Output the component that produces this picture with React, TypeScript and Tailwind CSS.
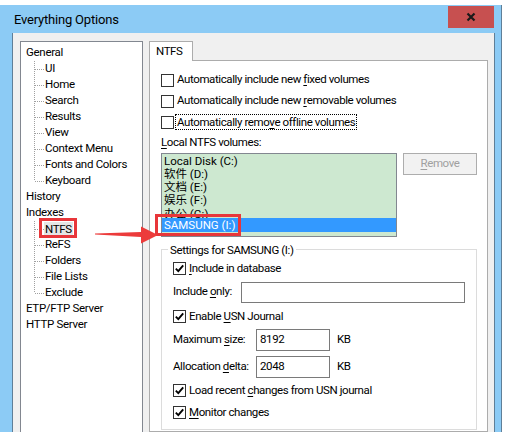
import type { ReactNode } from "react";

const font = "font-['Roboto','Noto_Sans_CJK_SC',sans-serif]";

// dotted tree connector drawn for each child row
const Connector = ({ last }: { last?: boolean }) => (
  <svg width="11" height="16" className="shrink-0">
    <line x1="0.5" y1="0" x2="0.5" y2={last ? 8 : 16} stroke="#a0a0a0" strokeDasharray="1 1" />
    <line x1="1" y1="8.5" x2="10" y2="8.5" stroke="#a0a0a0" strokeDasharray="1 1" />
  </svg>
);

const Root = ({ label }: { label: string }) => (
  <div className="h-[16px] flex items-center">{label}</div>
);

const Child = ({ label, last, selected }: { label: string; last?: boolean; selected?: boolean }) => (
  <div className="h-[16px] flex items-center pl-[8px]">
    <Connector last={last} />
    <span className={selected ? "bg-[#e5e5e5] px-[1px] -ml-[1px] leading-[15px]" : ""}>{label}</span>
  </div>
);

const Checkbox = ({ checked }: { checked?: boolean }) => (
  <span className="w-[13px] h-[13px] border border-[#333333] bg-white flex items-center justify-center shrink-0">
    {checked && (
      <svg width="11" height="11" viewBox="0 0 11 11">
        <path d="M1.8 5.6 L4.3 8.1 L9.2 2.4" fill="none" stroke="#000" strokeWidth="1.9" />
      </svg>
    )}
  </span>
);

const CheckRow = ({ checked, children, className = "" }: { checked?: boolean; children: ReactNode; className?: string }) => (
  <div className={`h-[20px] flex items-center gap-[3px] ${className}`}>
    <Checkbox checked={checked} />
    <span>{children}</span>
  </div>
);

const volumes = ["Local Disk (C:)", "软件 (D:)", "文档 (E:)", "娱乐 (F:)"];

export default function App() {
  return (
    <div className={`relative w-[506px] h-[432px] overflow-hidden bg-white text-[11.5px] tracking-[-0.4px] text-black whitespace-nowrap ${font}`}>
      <div className="mt-[5px] w-[502px] h-[427px] bg-[#8ccbf5] border-r border-[#5f7f98] flex flex-col">
        {/* title bar */}
        <div className="h-[28px] shrink-0 flex justify-between">
          <div className="pl-[14px] pt-[5px] text-[13px] tracking-[-0.2px] leading-[20px]">Everything Options</div>
          <div className="mt-[1px] mr-[7px] w-[46px] h-[22px] bg-[#c75050] flex items-center justify-center">
            <svg width="10" height="10" viewBox="0 0 10 10">
              <path d="M1.5 1.5 L8.5 8.5 M8.5 1.5 L1.5 8.5" stroke="#1a1a1a" strokeWidth="2.2" />
            </svg>
          </div>
        </div>

        {/* dialog body */}
        <div className="flex-1 ml-[12px] w-[483px] border-l border-r border-[#5f7f98] bg-[#f0f0f0] pl-[7px] pt-[8px] flex gap-[6px] overflow-hidden">
          {/* tree */}
          <div className="w-[123px] h-[400px] shrink-0 bg-white border border-[#828790] pl-[5px] pt-[3px] tracking-[-0.3px]">
            <Root label="General" />
            <Child label="UI" />
            <Child label="Home" />
            <Child label="Search" />
            <Child label="Results" />
            <Child label="View" />
            <Child label="Context Menu" />
            <Child label="Fonts and Colors" />
            <Child label="Keyboard" last />
            <Root label="History" />
            <Root label="Indexes" />
            <Child label="NTFS" selected />
            <Child label="ReFS" />
            <Child label="Folders" />
            <Child label="File Lists" />
            <Child label="Exclude" last />
            <Root label="ETP/FTP Server" />
            <Root label="HTTP Server" />
          </div>

          {/* tab control */}
          <div className="w-[339px] shrink-0 flex flex-col">
            <div className="relative z-10 -mb-px w-[44px] h-[21px] bg-white border border-b-0 border-[#acacac] pl-[6px] flex items-center">
              NTFS
            </div>
            <div className="h-[400px] bg-white border border-[#acacac] pl-[11px] pt-[9px]">
              <div className="h-[21px] flex items-center gap-[3px]">
                <Checkbox />
                <span>Automatically include new <u className="underline-offset-2">f</u>ixed volumes</span>
              </div>
              <div className="h-[21px] flex items-center gap-[3px]">
                <Checkbox />
                <span>Automatically include new <u className="underline-offset-2">r</u>emovable volumes</span>
              </div>
              <div className="h-[21px] flex items-center gap-[2px]">
                <Checkbox />
                <span className="outline outline-1 outline-dotted outline-black px-[1px] leading-[14px]">
                  Automatically remo<u className="underline-offset-2">v</u>e offline volumes
                </span>
              </div>
              <div className="h-[20px] flex items-center">
                <span><u className="underline-offset-2">L</u>ocal NTFS volumes:</span>
              </div>

              <div className="flex items-start gap-[6px]">
                <div className="w-[236px] h-[84px] border border-[#828790] bg-[#cde8d0] pt-[1px] flex flex-col overflow-hidden tracking-normal">
                  {volumes.map((v) => (
                    <div key={v} className="h-[13px] shrink-0 pl-[2px] flex items-center leading-[13px]">
                      {v}
                    </div>
                  ))}
                  <div className="h-[11px] shrink-0 pl-[2px] overflow-hidden leading-[13px] pt-[1px]">办公 (G:)</div>
                  <div className="h-[14px] shrink-0 bg-[#3399ff] text-white pl-[2px] flex items-center leading-[14px]">SAMSUNG (I:)</div>
                </div>
                <div className="w-[74px] h-[22px] border border-[#adadad] bg-[#f2f2f2] text-[#a0a0a0] flex items-center justify-center">
                  <span><u className="underline-offset-2">R</u>emove</span>
                </div>
              </div>

              <fieldset className="mt-[5px] w-[316px] border border-[#dcdcdc] px-0 pb-[6px]">
                <legend className="ml-[6px] px-[2px] leading-[16px]">Settings for SAMSUNG (I:)</legend>
                <div className="px-[11px]">
                  <CheckRow checked className="mt-[1px]">
                    <u className="underline-offset-2">I</u>nclude in database
                  </CheckRow>
                  <div className="mt-[3px] h-[21px] flex items-center">
                    <span className="w-[68px] shrink-0">Include <u className="underline-offset-2">o</u>nly:</span>
                    <div className="w-[224px] h-[21px] border border-[#7a7a7a] bg-white" />
                  </div>
                  <CheckRow checked className="mt-[4px]">
                    Enable <u className="underline-offset-2">U</u>SN Journal
                  </CheckRow>
                  <div className="mt-[2px] h-[22px] flex items-center">
                    <span className="w-[83px] shrink-0">Maximum <u className="underline-offset-2">s</u>ize:</span>
                    <div className="w-[74px] h-[22px] border border-[#7a7a7a] bg-white pl-[3px] flex items-center">8192</div>
                    <span className="ml-[7px]">KB</span>
                  </div>
                  <div className="mt-[5px] h-[22px] flex items-center">
                    <span className="w-[83px] shrink-0">Allocation <u className="underline-offset-2">d</u>elta:</span>
                    <div className="w-[74px] h-[22px] border border-[#7a7a7a] bg-white pl-[3px] flex items-center">2048</div>
                    <span className="ml-[7px]">KB</span>
                  </div>
                  <CheckRow checked className="mt-[3px]">
                    Load recent <u className="underline-offset-2">c</u>hanges from USN journal
                  </CheckRow>
                  <CheckRow checked className="mt-[2px]">
                    <u className="underline-offset-2">M</u>onitor changes
                  </CheckRow>
                </div>
              </fieldset>
            </div>
          </div>
        </div>
      </div>

      {/* red annotations */}
      <div className="absolute left-[39px] top-[218px] w-[38px] h-[20px] border-[3px] border-[#e8363a]" />
      <div className="absolute left-[155px] top-[214px] w-[86px] h-[22px] border-[3px] border-[#e8363a]" />
      <svg className="absolute left-[94px] top-[224px]" width="66" height="22" viewBox="0 0 66 22">
        <polygon points="1,9.5 47,8 47,2.5 64,11 47,19.5 47,13 1,10.5" fill="#ec3b3b" />
      </svg>
    </div>
  );
}
